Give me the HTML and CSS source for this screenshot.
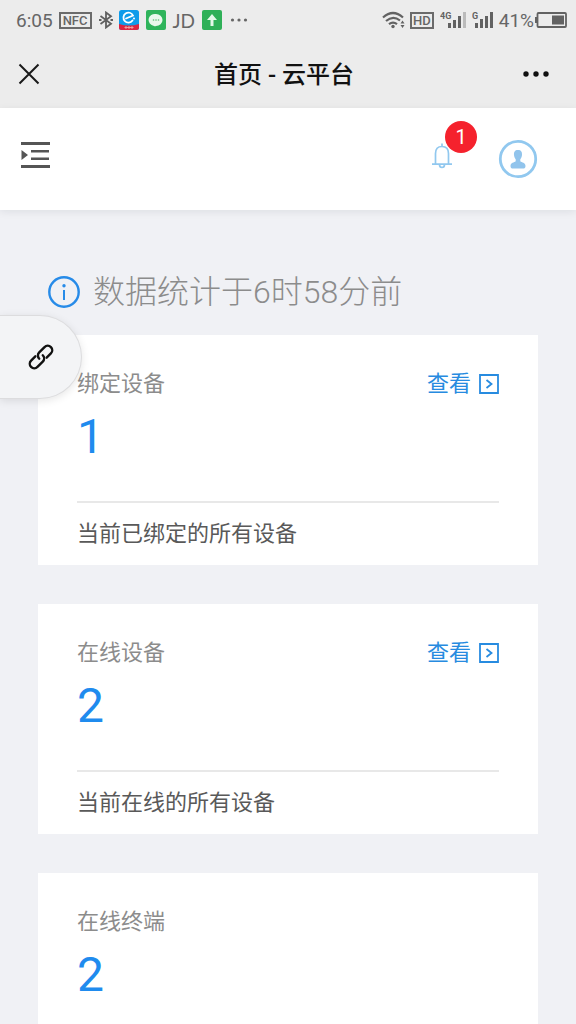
FILE: index.html
```html
<!DOCTYPE html>
<html lang="zh-CN">
<head>
<meta charset="utf-8">
<meta name="viewport" content="width=device-width, initial-scale=1">
<title>首页 - 云平台</title>
<link rel="stylesheet" href="styles.css">
</head>
<body>
<div class="app">
  <div class="status">
    <div class="status-left">
      <span class="clock">6:05</span>
      <span class="tag">NFC</span>
      <svg class="bluetooth" width="14" height="18" viewBox="0 0 14 18" fill="none" stroke="#606060" stroke-width="1.800"><path d="M1.500 5 12 12.700 7 16.500V1.500L12 5.300 1.500 13M0 9h2.500M11.500 9H14"/></svg>
      <svg width="20" height="20" viewBox="0 0 20 20"><rect width="20" height="20" rx="2.500" fill="#0e9bea"/><path d="M0 14q10 3 20 0v3.500a2.500 2.500 0 0 1-2.500 2.500h-15A2.500 2.500 0 0 1 0 17.500z" fill="#dc2440"/><path d="M13.500 10.500A5 5 0 1 1 14 5.500L7 8.500" fill="none" stroke="#fff" stroke-width="1.800" stroke-linecap="round"/><circle cx="15" cy="8.500" r="1" fill="#fff"/><path d="M5.500 17.500h9M7 16v3M10 16v3M13 16v3" stroke="#f3a9a0" stroke-width=".9"/></svg>
      <svg class="chat" width="20" height="20" viewBox="0 0 20 20"><rect width="20" height="20" rx="2" fill="#2fb45b"/><path d="M10 4a6.300 5.800 0 0 1 0 12q-1 .7-2 0A6.300 5.900 0 0 1 10 4z" fill="#e9f8ec"/><g fill="#5ebd78"><circle cx="7.500" cy="10" r=".8"/><circle cx="10" cy="10" r=".8"/><circle cx="12.500" cy="10" r=".8"/></g></svg>
      <span class="jd">JD</span>
      <svg width="20" height="20" viewBox="0 0 20 20"><rect width="20" height="20" rx="2" fill="#2fb058"/><path d="M10 4 15 10h-3.500v6h-3v-6H5z" fill="#e5f8e9"/></svg>
      <svg width="18" height="4" viewBox="0 0 18 4" fill="#666"><circle cx="2.500" cy="2" r="1.600"/><circle cx="9" cy="2" r="1.600"/><circle cx="15.500" cy="2" r="1.600"/></svg>
    </div>
    <div class="status-right">
      <svg class="wifi" width="24" height="18" viewBox="0 0 24 18" fill="none" stroke="#626262" stroke-width="2.200"><path d="M1 6.500Q11 -2.500 21 6.500M4 10Q11 3.800 18 9.500M7 13.200Q11 10 15 13.200"/><circle cx="11" cy="15.500" r="1.700" fill="#626262" stroke="none"/><path d="m18.500 12.500 2-3 2 3zM18.500 14l2 3 2-3z" fill="#626262" stroke="none"/></svg>
      <span class="tag tag-hd">HD</span>
      <svg width="26" height="18" viewBox="0 0 26 18" fill="#626262"><text class="net" x="0" y="8">4G</text><path d="M8 12h3v5H8zM13 9h3v8h-3zM18 5h3v12h-3z"/><path d="M23 1h3v16h-3z" fill="#bbb"/></svg>
      <svg width="21" height="18" viewBox="0 0 21 18" fill="#626262"><text class="net" x="0" y="8">G</text><path d="M3 12h3v5H3zM8 8h3v9H8zM13 5h3v12h-3zM18 1h3v16h-3z"/></svg>
      <span class="battery-text">41%</span>
      <svg width="32" height="16" viewBox="0 0 32 16"><rect x="2.500" y="1" width="28.500" height="14" rx="1" fill="none" stroke="#626262" stroke-width="1.800"/><path d="M0 5h2v6H0zM17 3.500h12v9H17z" fill="#626262"/></svg>
    </div>
  </div>

  <div class="titlebar">
    <button class="icon-btn" type="button" aria-label="关闭"><svg width="22" height="22" viewBox="0 0 22 22" fill="none" stroke="#191919" stroke-width="2"><path d="m1.500 1.500 19 19M20.500 1.500l-19 19"/></svg></button>
    <h1 class="title">首页 - 云平台</h1>
    <button class="icon-btn more" type="button" aria-label="更多"><svg width="28" height="8" viewBox="0 0 28 8" fill="#111"><circle cx="4" cy="4" r="2.700"/><circle cx="14" cy="4" r="2.700"/><circle cx="24" cy="4" r="2.700"/></svg></button>
  </div>

  <header class="header">
    <button class="icon-btn" type="button" aria-label="展开菜单"><svg width="30" height="28" viewBox="0 0 30 28" fill="#555"><path d="M1 1h29v3H1zM11 9h18v2.500H11zM11 16.500h18V19H11zM1 24h29v3H1zM1.500 9 8 14l-6.500 5z"/></svg></button>
    <div class="header-right">
      <button class="icon-btn bell" type="button" aria-label="通知"><svg width="20" height="26" viewBox="0 0 20 26" fill="none" stroke="#91c8ef" stroke-width="1.700"><path d="M3.500 21V10.500Q3.500 3.500 10 3.500T16.500 10.500V21M0 21.200h20M10 .5v3M7.500 21.500q0 3 2.500 3t2.500-3"/></svg><span class="badge">1</span></button>
      <button class="icon-btn" type="button" aria-label="账户"><svg width="40" height="40" viewBox="0 0 40 40"><circle cx="20" cy="20" r="17.700" fill="#fff" stroke="#91c8ef" stroke-width="2.800"/><path d="M20 11c3.200 0 4.200 2 4 5-.1 2-1 3.300-1.700 4.300v2c1.500 1.300 5.200 1.200 5.200 4.700 0 2-1 2.500-2.500 2.500H15c-1.500 0-2.500-.5-2.500-2.500 0-3.500 3.700-3.400 5.200-4.700v-2c-.7-1-1.600-2.300-1.700-4.300-.2-3 .8-5 4-5z" fill="#91c4ec"/></svg></button>
    </div>
  </header>

  <main class="content">
    <p class="notice"><svg width="32" height="32" viewBox="0 0 32 32"><circle cx="16" cy="16" r="14.700" fill="none" stroke="#278be8" stroke-width="2.400"/><circle cx="16" cy="9.800" r="1.700" fill="#278be8"/><path d="M15 14h2v10h-2z" fill="#278be8"/></svg><span>数据统计于6时58分前</span></p>

    <section class="card">
      <div class="card-head"><h2 class="label">绑定设备</h2><a class="view" href="#bound">查看<svg width="20" height="20" viewBox="0 0 20 20" fill="none" stroke="#278be0" stroke-width="1.800"><path d="M1 1h18v18H1zM7.500 6l5 4-5 4"/></svg></a></div>
      <div class="number">1</div>
      <p class="desc">当前已绑定的所有设备</p>
    </section>

    <section class="card">
      <div class="card-head"><h2 class="label">在线设备</h2><a class="view" href="#online">查看<svg width="20" height="20" viewBox="0 0 20 20" fill="none" stroke="#278be0" stroke-width="1.800"><path d="M1 1h18v18H1zM7.500 6l5 4-5 4"/></svg></a></div>
      <div class="number">2</div>
      <p class="desc">当前在线的所有设备</p>
    </section>

    <section class="card">
      <div class="card-head"><h2 class="label">在线终端</h2></div>
      <div class="number">2</div>
    </section>
  </main>

  <button class="float-link" type="button" aria-label="链接"><svg width="26" height="26" viewBox="0 0 26 26" fill="none" stroke="#111" stroke-width="2.400" stroke-linecap="round"><g transform="rotate(-45 13 13)"><path d="M9.500 8.500H3.500a4.500 4.500 0 0 0 0 9h7.500a4.500 4.500 0 0 0 4.500-4.500"/><path d="M16.500 17.500h6a4.500 4.500 0 0 0 0-9h-7.500a4.500 4.500 0 0 0-4.500 4.500"/></g></svg></button>
</div>
</body>
</html>
```
FILE: styles.css
```css
* { box-sizing: border-box; }

body {
  margin: 0;
  background: #f0f1f5;
  font-family: Roboto, "Noto Sans CJK SC", sans-serif;
}

h1, h2, p { margin: 0; font-weight: 400; }

svg { display: block; flex: none; }

.app {
  position: relative;
  display: flex;
  flex-direction: column;
  height: 100vh;
  overflow: hidden;
}

.icon-btn {
  display: flex;
  padding: 0;
  border: 0;
  background: none;
}

/* Phone status bar */
.status {
  display: flex;
  flex: none;
  justify-content: space-between;
  height: 40px;
  padding: 0 9px 0 16px;
  background: #ececec;
  color: #666;
}

.status-left, .status-right { display: flex; align-items: center; }
.status-left { gap: 8px; }
.status-right { gap: 6px; }

.clock { margin-right: -2px; font-size: 19px; }

.tag {
  padding: 0 2px;
  border: 2px solid #6b6b6b;
  font-size: 13px;
  font-weight: 500;
  line-height: 13px;
}

.tag-hd { padding: 0 1px; }
.bluetooth { margin: 0 -2px 0 -1px; }
.chat { margin-left: -1px; }
.jd { margin: 0 -1px; font-family: Lato, sans-serif; font-size: 19px; }
.net { font: 700 9px Roboto, sans-serif; }
.wifi { margin-right: -2px; }
.battery-text { margin-right: -5px; font-size: 19px; }

/* Title bar */
.titlebar {
  display: grid;
  flex: none;
  grid-template-columns: 1fr auto 1fr;
  align-items: center;
  height: 68px;
  padding: 0 26px 0 18px;
  background: #ececec;
}

.title {
  padding-top: 2px;
  color: #111;
  font-size: 24px;
  font-weight: 500;
  line-height: 36px;
}

.more { justify-self: end; }

/* Page header */
.header {
  z-index: 1;
  display: flex;
  flex: none;
  align-items: center;
  justify-content: space-between;
  height: 102px;
  padding: 0 38px 8px 20px;
  background: #fff;
  box-shadow: 0 2px 8px rgba(0, 21, 41, 0.08);
}

.header-right {
  display: flex;
  align-items: center;
  gap: 46px;
  padding-top: 8px;
}

.bell { position: relative; padding-bottom: 6px; }

.badge {
  position: absolute;
  bottom: 22px;
  left: 13px;
  width: 32px;
  border-radius: 16px;
  background: #f5222d;
  color: #fff;
  font-family: Roboto, sans-serif;
  font-size: 20px;
  line-height: 32px;
  text-align: center;
}

/* Content */
.content {
  display: flex;
  flex: 1;
  flex-direction: column;
  gap: 39px;
  min-height: 0;
  padding: 58px 38px 0;
  overflow-y: auto;
  scrollbar-width: none;
}

.notice {
  display: flex;
  align-items: center;
  gap: 13px;
  margin-bottom: -20px;
  padding-left: 10px;
  color: #8c8c8c;
  font-size: 32px;
  font-weight: 300;
  line-height: 48px;
}

.card {
  flex: none;
  min-height: 230px;
  padding: 32px 39px 15px;
  background: #fff;
}

.card-head {
  display: flex;
  align-items: center;
  justify-content: space-between;
  font-size: 22px;
  line-height: 34px;
}

.label { color: #8c8c8c; font-size: 22px; }

.view {
  display: flex;
  align-items: center;
  gap: 8px;
  color: #278be0;
  text-decoration: none;
}

.number {
  margin-top: 8px;
  color: #1f8bee;
  font-size: 48px;
  line-height: 56px;
}

.desc {
  margin-top: 36px;
  padding-top: 15px;
  border-top: 2px solid #e8e8e8;
  color: #595959;
  font-size: 22px;
  line-height: 32px;
}

/* Floating shortcut docked to the left edge */
.float-link {
  position: absolute;
  top: 315px;
  left: 0;
  z-index: 2;
  padding: 28px 27px 28px 28px;
  border: 1px solid #dcdcde;
  border-left: 0;
  border-radius: 0 42px 42px 0;
  background: #f3f4f6;
  box-shadow: 0 2px 8px rgba(0, 0, 0, 0.1);
}
```
